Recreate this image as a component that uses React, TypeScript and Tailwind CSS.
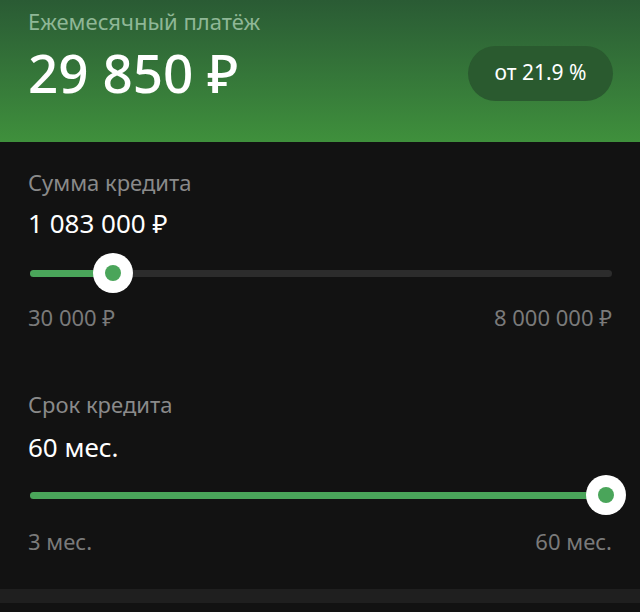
import React from "react";

function Slider({ pct }: { pct: number }) {
  return (
    <div className="relative h-[40px] flex items-center">
      <div className="relative w-full h-[7px] rounded-full bg-[#2c2c2c]">
        <div
          className="absolute left-0 top-0 h-full rounded-full bg-[#4aa55a]"
          style={{ width: `${pct}%` }}
        />
      </div>
      <div
        className="absolute top-0 w-[40px] h-[40px] -ml-[20px] rounded-full bg-white flex items-center justify-center"
        style={{ left: `${pct}%` }}
      >
        <div className="w-[16px] h-[16px] rounded-full bg-[#4aa55a]" />
      </div>
    </div>
  );
}

export default function App() {
  return (
    <div
      className="w-[640px] h-[612px] bg-[#121212] flex flex-col overflow-hidden"
      style={{ fontFamily: '"Noto Sans", "Open Sans", sans-serif' }}
    >
      <div className="h-[142px] shrink-0 bg-gradient-to-b from-[#2a5b34] to-[#3f903c] px-[28px] pt-[6px]">
        <div className="text-[22px] leading-[30px] text-[#8fb796]">Ежемесячный платёж</div>
        <div className="flex items-center justify-between mt-[6px]">
          <div className="text-[53px] leading-[62px] font-medium text-white">29 850 ₽</div>
          <div className="h-[55px] w-[145px] -mr-[1px] rounded-full bg-[#2a5a2f] flex items-center justify-center text-[21px] text-white">
            от 21.9 %
          </div>
        </div>
      </div>
      <div className="flex-1 px-[28px] pt-[25px]">
        <div className="text-[22px] leading-[30px] text-[#8a8a8a]">Сумма кредита</div>
        <div className="text-[26px] leading-[32px] text-white mt-[10px]">1 083 000 ₽</div>
        <div className="pl-[2px] mt-[14px]">
          <Slider pct={14.2} />
        </div>
        <div className="flex justify-between text-[22px] leading-[30px] text-[#7a7a7a] mt-[9px]">
          <span>30 000 ₽</span>
          <span>8 000 000 ₽</span>
        </div>
        <div className="text-[22px] leading-[30px] text-[#8a8a8a] mt-[57px]">Срок кредита</div>
        <div className="text-[26px] leading-[32px] text-white mt-[12px]">60 мес.</div>
        <div className="pl-[2px] mt-[12px]">
          <Slider pct={99} />
        </div>
        <div className="flex justify-between text-[22px] leading-[30px] text-[#7a7a7a] mt-[11px]">
          <span>3 мес.</span>
          <span>60 мес.</span>
        </div>
      </div>
      <div className="h-[14px] shrink-0 bg-[#1f1f1f] mb-[9px]" />
    </div>
  );
}
